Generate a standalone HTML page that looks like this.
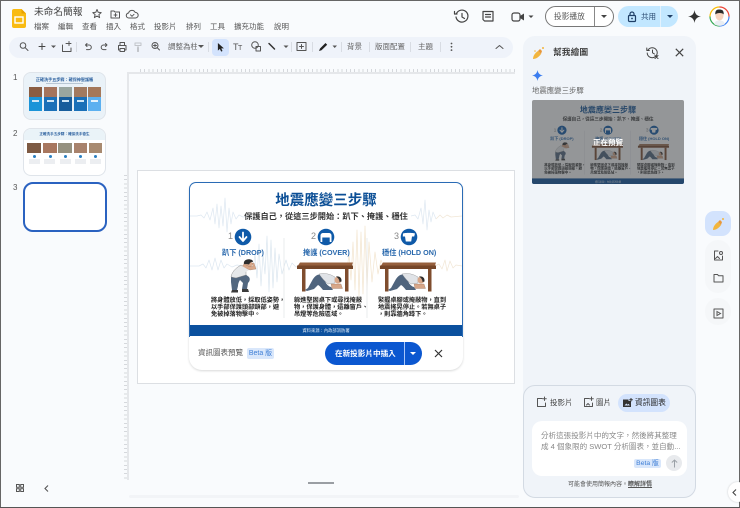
<!DOCTYPE html>
<html lang="zh-Hant"><head><meta charset="utf-8"><title>未命名簡報</title>
<style>
*{box-sizing:border-box}
html,body{margin:0;padding:0}
body{width:740px;height:508px;overflow:hidden;background:#f9fbfd;font-family:"Liberation Sans","Noto Sans CJK TC",sans-serif;color:#444}
#w{position:absolute;left:0;top:0;width:740px;height:508px;overflow:hidden;filter:blur(.3px)}
.a{position:absolute;white-space:nowrap}
svg{position:absolute;overflow:visible}
.ic{fill:none;stroke:#555;stroke-width:1;stroke-linecap:round;stroke-linejoin:round}
.m{top:21px;font-size:7.500px;color:#555;line-height:11px}
.tb{top:41px;font-size:7.500px;color:#666;line-height:11px}
.sep{position:absolute;top:42px;width:1px;height:10px;background:#d8dce3}
.ig{position:absolute;left:0;top:0;width:274px;height:155px;background:#fff;overflow:hidden}
.ig .t{position:absolute;white-space:nowrap}
.lab{top:66px;font-size:7.200px;font-weight:bold;color:#2a69ad;line-height:9px}
.num{top:49px;font-size:9px;color:#888;line-height:11px}
.d{top:115px;font-size:6.200px;line-height:7.100px;font-weight:bold;color:#222}
</style></head><body><div id="w">

<svg width="0" height="0" style="left:0;top:0"><defs>
<g id="icons" fill="none">
 <circle cx="54" cy="55" r="8.300" fill="#0f5aa8"/><path d="M54 50.500v7M50.500 55l3.500 4 3.500-4" stroke="#fff" stroke-width="1.800" stroke-linecap="round" stroke-linejoin="round"/>
 <circle cx="137" cy="55" r="8.300" fill="#0f5aa8"/><path d="M131.500 60v-6.500a2.500 2.500 0 0 1 2.500-2.500h6a2.500 2.500 0 0 1 2.500 2.500V60h-1.800v-4.500h-7.400V60z" fill="#fff"/>
 <circle cx="220" cy="55" r="8.300" fill="#0f5aa8"/><path d="M214 51.500c2-.8 10-.8 12 0l-.8 3-2.200 0-.8 5h-5.400l-.8-5-2.200 0z" fill="#fff"/>
 <!-- crouching person -->
 <g transform="translate(40,76)">
  <path d="M2 18 L16 16 L20 19 Q22 22 19 25 L18 31 L13 31 L14 25 L11 22 Q9 25 9 28 L8 32 L3 32 L2 24 z" fill="#52677f"/>
  <path d="M3 32h6v2.500H2zM13 31h6l1 3h-7z" fill="#3b3b3b"/>
  <path d="M2 19 Q3 12 12 7 L17 10 L17 17 L7 20z" fill="#e6e8ea" stroke="#7a7a7a" stroke-width=".4"/>
  <circle cx="19" cy="6" r="4.300" fill="#d9a88a"/>
  <path d="M15 6C14 2 19 0 23 2c1 .7 1 1.500 1 2-2-.5-3 1-4 2.500-1.500-.5-3-.5-5-.5z" fill="#2d2d2d"/>
  <path d="M13 9L21 12 L27 11 L25 5 L23 5 L24 8.500 L20 8.500 L15 6z" fill="#d9a88a" stroke="#8a6a55" stroke-width=".3"/>
  <path d="M13 8 L20 12 L17 14 L12 11z" fill="#e6e8ea"/>
 </g>
</g>
<g id="tbl" fill="none">
 <path d="M1 2.500h54l1-3H3z" fill="#96603d"/><rect x="0" y="2.500" width="56" height="3.500" fill="#754628"/>
 <rect x="5" y="6" width="3.500" height="22.500" fill="#7f4d2e"/><rect x="48" y="6" width="3.500" height="22.500" fill="#7f4d2e"/>
 <path d="M8 27 L11 25 L16 16 Q20 10 25 12 L28 18 Q30 23 34 24 L36 27 L26 27 Q22 22 21 22 L17 26 L10 28z" fill="#4f647d"/>
 <path d="M22 11 Q30 9 38 14 L38 20 L31 21 Q26 17 22 11z" fill="#e0e3e7" stroke="#777" stroke-width=".3"/>
 <circle cx="41" cy="17" r="3.500" fill="#d7a688"/><path d="M39 13.500c3-.8 6 1 5.500 5l-2 .5c0-2-1-4-3.500-5.500z" fill="#2d2d2d"/>
 <path d="M34 21h10l1.500 4.500H35z" fill="#d7a688" stroke="#8a6a55" stroke-width=".3"/>
</g>
</defs></svg>

<!-- window edge -->
<div class="a" style="left:0;top:0;width:740px;height:1px;background:#666"></div>
<div class="a" style="left:0;top:0;width:1px;height:508px;background:#666"></div>
<div class="a" style="left:739px;top:0;width:1px;height:508px;background:#666"></div>
<div class="a" style="left:0;top:507px;width:740px;height:1px;background:#555"></div>

<!-- logo -->
<svg style="left:12px;top:9px" width="14" height="19" viewBox="0 0 14 19"><path d="M2 0h7.500L14 4.500V17a2 2 0 0 1-2 2H2a2 2 0 0 1-2-2V2a2 2 0 0 1 2-2z" fill="#f9bb12"/><path d="M9.500 0L14 4.500H9.500z" fill="#e8a200"/><rect x="3" y="8" width="8" height="6" fill="none" stroke="#fff" stroke-width="1.400"/></svg>
<div class="a" style="left:34px;top:6px;font-size:9.700px;line-height:14px;color:#444">未命名簡報</div>
<svg style="left:92px;top:8px" width="50" height="12" viewBox="0 0 50 12"><path class="ic" d="M5 1.500l1.200 2.800 3 .3-2.300 2 .7 3L5 8l-2.600 1.600.7-3-2.300-2 3-.3z"/><path class="ic" d="M19 3h3l1 1h4.500v6H19zM23.500 5.500v3M22 7h3"/><path class="ic" d="M37 10a2.500 2.500 0 0 1-.4-5 3.500 3.500 0 0 1 6.600-.6 2.800 2.800 0 0 1 .3 5.600zM38.500 6.800l1.500 1.500 2-2"/></svg>
<div class="a m" style="left:34px">檔案</div><div class="a m" style="left:58px">編輯</div><div class="a m" style="left:82px">查看</div><div class="a m" style="left:106px">插入</div><div class="a m" style="left:130px">格式</div><div class="a m" style="left:154px">投影片</div><div class="a m" style="left:186px">排列</div><div class="a m" style="left:210px">工具</div><div class="a m" style="left:234px">擴充功能</div><div class="a m" style="left:274px">說明</div>

<!-- top right -->
<svg style="left:453px;top:8px" width="120" height="18" viewBox="0 0 120 18">
<path class="ic" style="stroke-width:1.200;stroke:#444" d="M3.500 5.500A6 6 0 1 1 3 9M1.500 3.500v2.500H4M9 5.500V9l2.500 1.500"/>
<path class="ic" style="stroke-width:1.200;stroke:#444" d="M30 3.500h10v9.500h-8.500l-1.500-1.500zM32.500 6.500h5M32.500 9h5"/>
<rect class="ic" style="stroke-width:1.200;stroke:#444" x="59" y="5" width="8" height="8" rx="2"/><path d="M67 8l4-2.500v7L67 10z" fill="#444"/><path d="M75.500 7.500h5L78 10z" fill="#444"/>
</svg>
<div class="a" style="left:545px;top:6px;width:69px;height:21px;border:1px solid #777;border-radius:11px;background:#fff"></div>
<div class="a" style="left:594px;top:7px;width:1px;height:19px;background:#888"></div>
<div class="a" style="left:554px;top:11px;font-size:7.700px;line-height:11px;color:#555">投影播放</div>
<svg style="left:601px;top:15px" width="6" height="4"><path d="M0 0h6L3 3z" fill="#444"/></svg>
<div class="a" style="left:618px;top:6px;width:60px;height:21px;border-radius:11px;background:#c2e7ff"></div>
<div class="a" style="left:660px;top:6px;width:1px;height:21px;background:#e3f2fd"></div>
<svg style="left:627px;top:11px" width="10" height="12" viewBox="0 0 10 12"><rect x="1.500" y="4.500" width="7" height="6" rx="1" fill="none" stroke="#1f3f66" stroke-width="1.200"/><path d="M3 4.500V3a2 2 0 0 1 4 0v1.500" fill="none" stroke="#1f3f66" stroke-width="1.200"/><circle cx="5" cy="7.500" r=".9" fill="#1f3f66"/></svg>
<div class="a" style="left:641px;top:11px;font-size:7.500px;line-height:11px;color:#2a4a70">共用</div>
<svg style="left:667px;top:15px" width="6" height="4"><path d="M0 0h6L3 3z" fill="#1f3f66"/></svg>
<svg style="left:688px;top:10px" width="13" height="13" viewBox="0 0 13 13"><path d="M6.500 0C7 4 9 6 13 6.500 9 7 7 9 6.500 13 6 9 4 7 0 6.500 4 6 6 4 6.500 0z" fill="#333"/></svg>
<svg style="left:709px;top:6px" width="21" height="21" viewBox="0 0 21 21"><circle cx="10.500" cy="10.500" r="9.500" fill="#fff"/><path d="M10.500 1a9.500 9.500 0 0 1 9.500 9.500" fill="none" stroke="#ea4335" stroke-width="1.200"/><path d="M20 10.500A9.500 9.500 0 0 1 10.500 20" fill="none" stroke="#4285f4" stroke-width="1.200"/><path d="M10.500 20A9.500 9.500 0 0 1 1 10.500" fill="none" stroke="#34a853" stroke-width="1.200"/><path d="M1 10.500A9.500 9.500 0 0 1 10.500 1" fill="none" stroke="#fbbc05" stroke-width="1.200"/><ellipse cx="10.500" cy="9.500" rx="4" ry="5" fill="#f6d3bf"/><path d="M6.300 8.500C6 4 8 3.500 10.500 3.500s4.500.8 4.200 5C13.500 6.500 8 6.500 6.300 8.500z" fill="#2a2a2a"/><path d="M5 18c1-3 3-3.500 5.500-3.500S15 15 16 18a9 9 0 0 1-11 0z" fill="#e9edf2"/></svg>

<!-- toolbar -->
<div class="a" style="left:9px;top:37px;width:504px;height:21px;border-radius:11px;background:#eff3fa"></div>
<svg style="left:18px;top:40px" width="200" height="15" viewBox="0 0 200 15">
<circle class="ic" cx="5" cy="5.500" r="2.800"/><path class="ic" d="M7.200 7.700L10 10.500"/>
<path class="ic" style="stroke:#444" d="M24 3.500v6M21 6.500h6"/><path d="M33 5.500h5L35.500 8z" fill="#555"/>
<path class="ic" d="M48 3.500h3M44.500 5v6.500h8.500V8M51 1.500v4M49 3.500h4"/>
<path class="ic" d="M67.500 5H71a2.300 2.300 0 0 1 0 4.600h-2.500M69 3.500L67.500 5 69 6.500"/>
<path class="ic" d="M89 5h-3.500a2.300 2.300 0 0 0 0 4.600H88M87.500 3.500L89 5l-1.500 1.500"/>
<path class="ic" d="M100.500 5.500h7.500v4.500h-1.500M100.500 10v-4.500M100.500 10h1.500M102 8.500h4.500v3h-4.500zM102 5.500v-3h4.500v3"/>
<path class="ic" style="stroke:#c2c5ca" d="M117 3h6v2.500h-6zM120 5.500v2M119.500 7.500h1v4h-1z"/>
<circle class="ic" cx="137" cy="5.500" r="3"/><path class="ic" d="M139.200 7.700l2.300 2.300M135.500 5.500h3M137 4v3"/>
</svg>
<div class="a tb" style="left:168px;width:29px;overflow:hidden">調整為柱</div>
<svg style="left:198px;top:45px" width="6" height="4"><path d="M0 0h6L3 3z" fill="#555"/></svg>
<div class="sep" style="left:76px"></div><div class="sep" style="left:208px"></div>
<div class="a" style="left:212px;top:39px;width:17px;height:17px;border-radius:4px;background:#d3e3fd"></div>
<svg style="left:217px;top:42px" width="8" height="11" viewBox="0 0 9 12"><path d="M1 1v8.500l2.200-2 1.500 3.200 1.500-.7L4.800 7H7.800z" fill="#222"/></svg>
<div class="a" style="left:233px;top:41px;font-size:9px;line-height:12px;color:#555;letter-spacing:-.5px">T<span style="font-size:7px">T</span></div>
<svg style="left:250px;top:40px" width="60" height="15" viewBox="0 0 60 15">
<circle class="ic" cx="5" cy="5" r="3.300"/><rect class="ic" x="6" y="6.500" width="4.500" height="4.500" fill="#eff3fa"/>
<path class="ic" style="stroke-width:1.500;stroke:#333" d="M19 3.500l5.500 5.500"/><path d="M33.500 5.500h5L36 8z" fill="#555"/>
</svg>
<div class="sep" style="left:291px"></div>
<svg style="left:295px;top:41px" width="14" height="13" viewBox="0 0 14 13"><path class="ic" d="M2 1.500h9v8h-9zM6.500 3.500v4M4.500 5.500h4"/></svg>
<div class="sep" style="left:312px"></div>
<svg style="left:318px;top:40px" width="22" height="13" viewBox="0 0 22 13"><path d="M1 11l1-2.500L7.500 3l1.700 1.700L3.500 10.200z" fill="#222"/><path d="M14.500 5.500h4.500L16.700 8z" fill="#555"/></svg>
<div class="sep" style="left:341px"></div>
<div class="a tb" style="left:347px">背景</div><div class="sep" style="left:369px"></div>
<div class="a tb" style="left:375px">版面配置</div><div class="sep" style="left:410px"></div>
<div class="a tb" style="left:418px">主題</div><div class="sep" style="left:440px"></div>
<svg style="left:450px;top:42px" width="3" height="10"><circle cx="1.500" cy="1.500" r=".9" fill="#555"/><circle cx="1.500" cy="4.800" r=".9" fill="#555"/><circle cx="1.500" cy="8.100" r=".9" fill="#555"/></svg>
<svg style="left:495px;top:44px" width="9" height="6"><path class="ic" d="M1 4.500L4.500 1.500 8 4.500"/></svg>

<!-- thumbs -->
<div class="a" style="left:13px;top:73px;font-size:8px;color:#555;line-height:10px">1</div>
<div class="a" style="left:13px;top:129px;font-size:8px;color:#555;line-height:10px">2</div>
<div class="a" style="left:13px;top:183px;font-size:8px;color:#555;line-height:10px">3</div>
<div class="a" style="left:23px;top:72px;width:83px;height:48px;border:1px solid #dfe4ea;border-radius:8px;background:#eaf2f8;overflow:hidden">
<div class="a" style="left:0;width:81px;text-align:center;top:4px;font-size:4.100px;line-height:5px;font-weight:bold;color:#2a5f9e">正確洗手五步驟：確保神聖護觸</div>
<div class="a" style="left:22px;top:10px;width:37px;height:1px;background:#b9c7d4"></div>
<div class="a" style="left:5px;top:14px;width:13px;height:10px;background:#8a5d42"></div><div class="a" style="left:20px;top:14px;width:13px;height:10px;background:#a5745c"></div><div class="a" style="left:35px;top:14px;width:13px;height:10px;background:#9aa69f"></div><div class="a" style="left:50px;top:14px;width:13px;height:10px;background:#a27a60"></div><div class="a" style="left:64px;top:14px;width:13px;height:10px;background:#a5785a"></div>
<div class="a" style="left:5px;top:24px;width:13px;height:14px;background:#1b94d8"></div><div class="a" style="left:20px;top:24px;width:13px;height:14px;background:#1a70b8"></div><div class="a" style="left:35px;top:24px;width:13px;height:14px;background:#175d9c"></div><div class="a" style="left:50px;top:24px;width:13px;height:14px;background:#1a70b8"></div><div class="a" style="left:64px;top:24px;width:13px;height:14px;background:#5cb0f0"></div>
<div class="a" style="left:8px;top:27px;width:7px;height:1.500px;background:#cfe6f6"></div><div class="a" style="left:23px;top:27px;width:7px;height:1.500px;background:#cfe6f6"></div><div class="a" style="left:38px;top:27px;width:7px;height:1.500px;background:#cfe6f6"></div><div class="a" style="left:53px;top:27px;width:7px;height:1.500px;background:#cfe6f6"></div><div class="a" style="left:67px;top:27px;width:7px;height:1.500px;background:#e4f2fc"></div>
</div>
<div class="a" style="left:23px;top:128px;width:83px;height:48px;border:1px solid #dfe4ea;border-radius:8px;background:#fff;overflow:hidden">
<div class="a" style="left:0;top:0;width:81px;height:11px;background:#eaf3f8"></div>
<div class="a" style="left:0;width:81px;text-align:center;top:3px;font-size:3.600px;line-height:5px;font-weight:bold;color:#2a5f9e">正確洗手五步驟：確保洗手衛生</div>
<div class="a" style="left:3px;top:14px;width:14px;height:10px;background:#7e5a43"></div><div class="a" style="left:19px;top:14px;width:14px;height:10px;background:#a8775f"></div><div class="a" style="left:34px;top:14px;width:14px;height:10px;background:#96917f"></div><div class="a" style="left:50px;top:14px;width:13px;height:10px;background:#a8826c"></div><div class="a" style="left:65px;top:14px;width:13px;height:10px;background:#a88a70"></div>
<div class="a" style="left:9px;top:26px;width:3px;height:3px;border-radius:50%;background:#2a7fc0"></div><div class="a" style="left:25px;top:26px;width:3px;height:3px;border-radius:50%;background:#2a7fc0"></div><div class="a" style="left:40px;top:26px;width:3px;height:3px;border-radius:50%;background:#2a7fc0"></div><div class="a" style="left:55px;top:26px;width:3px;height:3px;border-radius:50%;background:#2a7fc0"></div><div class="a" style="left:70px;top:26px;width:3px;height:3px;border-radius:50%;background:#2a7fc0"></div>
<div class="a" style="left:5px;top:30px;width:11px;height:5px;background:#eceef1"></div><div class="a" style="left:20px;top:30px;width:11px;height:5px;background:#eceef1"></div><div class="a" style="left:36px;top:30px;width:11px;height:5px;background:#eceef1"></div><div class="a" style="left:51px;top:30px;width:11px;height:5px;background:#eceef1"></div><div class="a" style="left:66px;top:30px;width:11px;height:5px;background:#eceef1"></div>
</div>
<div class="a" style="left:23px;top:182px;width:84px;height:50px;border:2px solid #2a62c0;border-radius:10px;background:#fff"></div>

<!-- rulers -->
<div class="a" style="left:127px;top:72px;width:388px;height:1.500px;background:#e5e7ea"></div>
<div class="a" style="left:127px;top:72px;width:1.500px;height:408px;background:#e5e7ea"></div>
<div class="a" style="left:140px;top:69px;width:375px;height:3px;background:repeating-linear-gradient(90deg,#d5d8dc 0 1px,transparent 1px 4.200px)"></div>
<div class="a" style="left:124px;top:175px;width:3px;height:305px;background:repeating-linear-gradient(180deg,#d5d8dc 0 1px,transparent 1px 4.200px)"></div>

<!-- slide -->
<div class="a" style="left:137px;top:170px;width:378px;height:214px;background:#fff;border:1px solid #dcdfe3"></div>

<!-- infographic dialog -->
<div class="a" style="left:189px;top:182px;width:274px;height:188px;background:#fff;border-radius:8px 8px 13px 13px;box-shadow:0 1px 2px rgba(60,64,67,.2)"></div>
<div class="a" style="left:189px;top:182px;width:274px;height:155px;overflow:hidden;border-radius:7px 7px 0 0">
 <div class="ig">
 <svg style="left:0;top:0" width="274" height="155" viewBox="0 0 274 155" fill="none">
 <g stroke-width=".7" stroke-linejoin="round">
 <polyline stroke="#dde7f1" points="1,34 8,34 12,33 15,36 18,30 21,38 24,26 26,42 28,22 30,46 32,24 34,44 36,16 38,50 40,26 42,42 44,30 47,37 50,33 54,35 62,34"/>
 <polyline stroke="#dde7f1" points="222,34 226,33 229,37 232,26 234,42 236,18 238,48 240,28 242,40 244,30 247,37"/>
 <polyline stroke="#f1e6d5" points="247,37 251,33 254,36 258,33 262,35 273,34"/>
 <polyline stroke="#dde7f1" points="1,84 10,84 14,82 17,86 20,78 23,88 26,76 29,88 32,78 35,86 38,82 43,85 48,83 54,84"/>
 <polyline stroke="#dbe6ef" points="54,84 60,83 64,87 66,72 68,96 70,62 72,104 74,72 76,92 78,54 80,110 82,58 84,106 86,66 88,100 90,72 93,92 97,78 100,88 103,81 107,85 112,84"/>
 <polyline stroke="#f3e5cf" points="150,84 155,83 158,88 160,72 162,98 164,60 166,108 168,48 170,114 172,50 174,112 176,44 178,108 180,60 183,100 186,70 189,92 192,78 195,86 198,82 205,84"/>
 <polyline stroke="#f1e6d5" points="246,84 250,82 253,87 256,78 258,89 261,79 264,86 267,83 273,84"/>
 </g>
 <line x1="95" y1="56" x2="95" y2="136" stroke="#e4e7ea" stroke-width=".8"/>
 <line x1="178" y1="56" x2="178" y2="136" stroke="#e4e7ea" stroke-width=".8"/>
 <use href="#icons"/>
 <use href="#tbl" transform="translate(108,81)"/>
 <use href="#tbl" transform="translate(191,81)"/>
 </svg>
 <div class="t" style="left:0;width:274px;text-align:center;top:10px;font-size:14.500px;line-height:18px;font-weight:bold;color:#0c4f96">地震應變三步驟</div>
 <div class="t" style="left:0;width:274px;text-align:center;top:29px;font-size:8.200px;line-height:11px;font-weight:bold;color:#333">保護自己，從這三步開始：趴下、掩護、穩住</div>
 <div class="t num" style="left:39px">1</div><div class="t num" style="left:122px">2</div><div class="t num" style="left:205px">3</div>
 <div class="t lab" style="left:33px">趴下 (DROP)</div><div class="t lab" style="left:114px">掩護 (COVER)</div><div class="t lab" style="left:193px">穩住 (HOLD ON)</div>
 <div class="t d" style="left:22px">將身體放低，採取低姿勢，<br>以手部保護頭部頸部，避<br>免被掉落物擊中。</div>
 <div class="t d" style="left:105px">躲進堅固桌下或尋找掩蔽<br>物，保護身體，遠離窗戶、<br>吊燈等危險區域。</div>
 <div class="t d" style="left:189px">緊握桌腳或掩蔽物，直到<br>地震搖晃停止。若無桌子<br>，則靠牆角蹲下。</div>
 <div class="t" style="left:0;top:143px;width:274px;height:11px;background:#0b509e;color:#dce8f5;font-size:4.300px;line-height:11px;text-align:center">資料來源：內政部消防署</div>
 </div>
</div>
<div class="a" style="left:189px;top:182px;width:274px;height:155px;overflow:hidden;border-radius:7px 7px 0 0;border:1.500px solid #2a6bb5;border-bottom:0"></div>
<div class="a" style="left:198px;top:347px;font-size:7.500px;line-height:12px;color:#555">資訊圖表預覽</div>
<div class="a" style="left:247px;top:348px;width:27px;height:11px;border-radius:2px;background:#d9e7fb;color:#3f7fd6;font-size:7px;line-height:11px;text-align:center">Beta 版</div>
<div class="a" style="left:325px;top:342px;width:97px;height:23px;border-radius:12px;background:#0b57d0"></div>
<div class="a" style="left:404px;top:342px;width:1px;height:23px;background:#a8c7fa"></div>
<div class="a" style="left:335px;top:348px;font-size:7.600px;line-height:11px;font-weight:bold;color:#fff">在新投影片中插入</div>
<svg style="left:410px;top:352px" width="6" height="4"><path d="M0 0h6L3 3z" fill="#fff"/></svg>
<svg style="left:434px;top:349px" width="9" height="9"><path d="M1 1l7 7M8 1L1 8" stroke="#333" stroke-width="1.200"/></svg>

<!-- bottom left -->
<svg style="left:16px;top:484px" width="8" height="8"><g fill="none" stroke="#555" stroke-width="1"><rect x=".5" y=".5" width="2.800" height="2.800"/><rect x="4.700" y=".5" width="2.800" height="2.800"/><rect x=".5" y="4.700" width="2.800" height="2.800"/><rect x="4.700" y="4.700" width="2.800" height="2.800"/></g></svg>
<svg style="left:44px;top:485px" width="5" height="7"><path d="M4 .5L1 3.500l3 3" fill="none" stroke="#555" stroke-width="1.100"/></svg>
<div class="a" style="left:308px;top:482px;width:26px;height:1.500px;background:#9a9ea3"></div>
<div class="a" style="left:129px;top:495px;width:390px;height:3px;border-radius:2px;background:#f2f4f7"></div>

<!-- right panel -->
<div class="a" style="left:523px;top:36px;width:173px;height:461px;border-radius:12px;background:#f0f4f9"></div>
<svg style="left:532px;top:46px" width="13" height="14" viewBox="0 0 13 14"><path d="M1 13c0-3 2-6 5-8l3 3c-2 3-5 5-8 5z" fill="#f2b53d"/><path d="M6 5l2-2 2 2-1 3z" fill="#e8973a"/><circle cx="11" cy="2" r="1" fill="#f2b53d"/><circle cx="3" cy="5" r=".8" fill="#f2b53d"/></svg>
<div class="a" style="left:553px;top:45px;font-size:8.800px;line-height:14px;font-weight:bold;color:#444">幫我繪圖</div>
<svg style="left:646px;top:46px" width="13" height="13" viewBox="0 0 13 13"><path class="ic" style="stroke:#444" d="M2 4a5 5 0 1 1-.8 3M.8 2v2.500h2.500M6.500 4v2.800L8.500 8"/><path class="ic" style="stroke:#444" d="M9 9.500l3 3M12 9.500l-3 3"/></svg>
<svg style="left:675px;top:48px" width="9" height="9"><path d="M.8.8l7.400 7.400M8.200.8L.8 8.200" stroke="#444" stroke-width="1.200"/></svg>
<svg style="left:532px;top:70px" width="11" height="11" viewBox="0 0 11 11"><path d="M5.500 0C6 3.300 7.700 5 11 5.500 7.700 6 6 7.700 5.500 11 5 7.700 3.300 6 0 5.500 3.300 5 5 3.300 5.500 0z" fill="#3b7df0"/></svg>
<div class="a" style="left:532px;top:85px;font-size:7.400px;line-height:12px;color:#666">地震應變三步驟</div>

<!-- preview -->
<div class="a" style="left:532px;top:100px;width:152px;height:84px;overflow:hidden;border-radius:2px">
 <div style="position:absolute;left:0;top:0;width:274px;height:155px;transform:scale(.5547,.5484);transform-origin:0 0">
 <div class="ig">
 <svg style="left:0;top:0" width="274" height="155" viewBox="0 0 274 155" fill="none">
 <line x1="95" y1="56" x2="95" y2="136" stroke="#dfe3e7" stroke-width=".8"/>
 <line x1="178" y1="56" x2="178" y2="136" stroke="#dfe3e7" stroke-width=".8"/>
 <use href="#icons"/>
 <use href="#tbl" transform="translate(108,81)"/>
 <use href="#tbl" transform="translate(191,81)"/>
 </svg>
 <div class="t" style="left:0;width:274px;text-align:center;top:10px;font-size:14.500px;line-height:18px;font-weight:bold;color:#0c4f96">地震應變三步驟</div>
 <div class="t" style="left:0;width:274px;text-align:center;top:29px;font-size:8.200px;line-height:11px;font-weight:bold;color:#333">保護自己，從這三步開始：趴下、掩護、穩住</div>
 <div class="t num" style="left:39px">1</div><div class="t num" style="left:122px">2</div><div class="t num" style="left:205px">3</div>
 <div class="t lab" style="left:33px">趴下 (DROP)</div><div class="t lab" style="left:114px">掩護 (COVER)</div><div class="t lab" style="left:193px">穩住 (HOLD ON)</div>
 <div class="t d" style="left:22px">將身體放低，採取低姿勢，<br>以手部保護頭部頸部，避<br>免被掉落物擊中。</div>
 <div class="t d" style="left:105px">躲進堅固桌下或尋找掩蔽<br>物，保護身體，遠離窗戶、<br>吊燈等危險區域。</div>
 <div class="t d" style="left:189px">緊握桌腳或掩蔽物，直到<br>地震搖晃停止。若無桌子<br>，則靠牆角蹲下。</div>
 <div class="t" style="left:0;top:143px;width:274px;height:12px;background:#0b509e;color:#dce8f5;font-size:4.300px;line-height:12px;text-align:center">資料來源：內政部消防署</div>
 </div></div>
 <div class="a" style="left:0;top:0;width:152px;height:84px;background:rgba(60,64,67,.55)"></div>
 <div class="a" style="left:0;width:152px;text-align:center;top:37px;font-size:7.500px;line-height:12px;font-weight:bold;color:#fff">正在預覽</div>
</div>

<!-- prompt card -->
<div class="a" style="left:523px;top:385px;width:173px;height:113px;border-radius:12px;background:#f0f4f9;border:1px solid #d3dae3"></div>
<svg style="left:537px;top:397px" width="10" height="10" viewBox="0 0 10 10"><path class="ic" d="M5 1.500H.5v8h8V6M7.500 0v3.500M5.700 1.700h3.600"/></svg>
<div class="a" style="left:550px;top:397px;font-size:7.500px;line-height:12px;color:#444">投影片</div>
<svg style="left:584px;top:397px" width="10" height="10" viewBox="0 0 10 10"><path class="ic" d="M5 1.500H.5v8h8V6M7.500 0v3.500M5.700 1.700h3.600M2.500 8l1.500-1.500L5.500 8"/></svg>
<div class="a" style="left:596px;top:397px;font-size:7.500px;line-height:12px;color:#444">圖片</div>
<div class="a" style="left:618px;top:394px;width:52px;height:18px;border-radius:9px;background:#d3e3fd"></div>
<svg style="left:623px;top:398px" width="10" height="9" viewBox="0 0 10 9"><path d="M0 1.500h5.500v1.500H8v6H0z" fill="#333"/><path d="M8 0v3.500M6.300 1.700h3.500" stroke="#333" stroke-width="1"/><path d="M1.500 7.500l1.800-2 1.300 1.300 1-1 1.200 1.700z" fill="#d3e3fd"/></svg>
<div class="a" style="left:635px;top:397px;font-size:7.700px;line-height:12px;color:#222">資訊圖表</div>
<div class="a" style="left:532px;top:421px;width:155px;height:55px;border-radius:10px;background:#fff"></div>
<div class="a" style="left:541px;top:430px;font-size:7.550px;line-height:11px;color:#888">分析這張投影片中的文字，然後將其整理<br>成 4 個象限的 SWOT 分析圖表，並自動...</div>
<div class="a" style="left:634px;top:459px;width:27px;height:9px;border-radius:2px;background:#d9e7fb;color:#3f7fd6;font-size:6.800px;line-height:9px;text-align:center">Beta 版</div>
<div class="a" style="left:666px;top:455px;width:16px;height:16px;border-radius:50%;background:#e8eaed"></div>
<svg style="left:670.500px;top:458.500px" width="7" height="9"><path d="M3.500 8.500V1M.8 3.500L3.500 1l2.700 2.500" fill="none" stroke="#9aa0a6" stroke-width="1"/></svg>
<div class="a" style="left:568px;top:480px;font-size:6px;line-height:10px;color:#555">可能會使用簡報內容。<span style="text-decoration:underline;font-weight:bold">瞭解詳情</span></div>

<!-- right rail -->
<div class="a" style="left:705px;top:211px;width:26px;height:25px;border-radius:9px;background:#d3e3fd"></div>
<svg style="left:712px;top:217px" width="13" height="14" viewBox="0 0 13 14"><path d="M1 13c0-3 2-6 5-8l3 3c-2 3-5 5-8 5z" fill="#f2b53d"/><path d="M6 5l2-2 2 2-1 3z" fill="#e8973a"/><circle cx="11" cy="2" r="1" fill="#f2b53d"/></svg>
<div class="a" style="left:705px;top:240px;width:26px;height:53px;border-radius:13px;background:#f5f7f9"></div>
<div class="a" style="left:705px;top:298px;width:26px;height:27px;border-radius:13px;background:#f5f7f9"></div>
<svg style="left:713px;top:250px" width="11" height="11" viewBox="0 0 11 11"><path class="ic" d="M5 1H1.500v9h8V6M2.500 8.500L4.500 6.500l2 2M8 1.500a1.500 1.500 0 1 0 0 3 1.500 1.500 0 0 0 0-3z"/></svg>
<svg style="left:713px;top:273px" width="11" height="10" viewBox="0 0 11 10"><path class="ic" d="M1 1.500h3.500l1 1.200H10V9H1z"/></svg>
<svg style="left:713px;top:308px" width="11" height="11" viewBox="0 0 11 11"><rect class="ic" x="1" y="1" width="9" height="9"/><path d="M4 3.500l3.500 2-3.500 2z" fill="none" stroke="#555" stroke-width="1"/></svg>
<div class="a" style="left:728px;top:482px;width:20px;height:20px;border-radius:50%;background:#fff;box-shadow:0 0 2px rgba(0,0,0,.2)"></div>
<svg style="left:732px;top:489px" width="5" height="7"><path d="M4 .5L1 3.500l3 3" fill="none" stroke="#444" stroke-width="1.100"/></svg>
</div></body></html>
